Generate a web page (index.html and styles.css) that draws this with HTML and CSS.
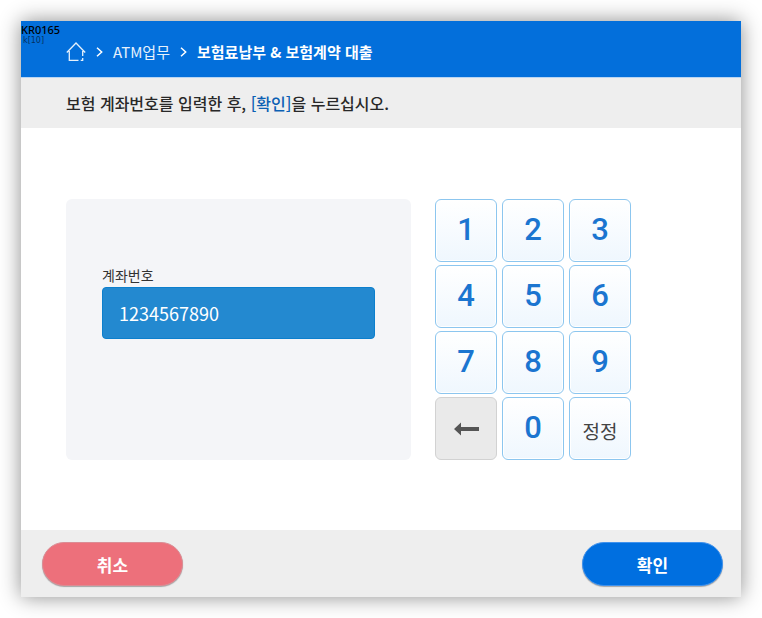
FILE: index.html
```html
<!DOCTYPE html>
<html lang="ko">
<head>
<meta charset="utf-8">
<meta name="viewport" content="width=device-width, initial-scale=1">
<title>보험료납부 &amp; 보험계약 대출</title>
<link rel="stylesheet" href="styles.css">
</head>
<body>
<form class="screen">
  <header class="topbar">
    <div class="debug"><strong class="debug-id">KR0165</strong><span class="debug-key">k[10]</span></div>
    <nav class="crumbs">
      <a class="home" href="#" aria-label="홈">
        <svg width="20" height="20" viewBox="0 0 20 20" fill="none" stroke="currentColor" stroke-width="1.3"><path d="M.8 10.5 10 1l9.2 9.5M3.3 9v9.3h9.2M16.7 9v5M16.7 16v2.3h-2"/></svg>
      </a>
      <svg class="chevron" width="7" height="10" viewBox="0 0 7 10" fill="none" stroke="currentColor" stroke-width="1.5"><path d="m1 .7 4.7 4.3L1 9.3"/></svg>
      <a class="crumb" href="#">ATM업무</a>
      <svg class="chevron" width="7" height="10" viewBox="0 0 7 10" fill="none" stroke="currentColor" stroke-width="1.5"><path d="m1 .7 4.7 4.3L1 9.3"/></svg>
      <span class="current">보험료납부 &amp; 보험계약 대출</span>
    </nav>
  </header>
  <h1 class="prompt">보험 계좌번호를 입력한 후, <span class="accent">[확인]</span>을 누르십시오.</h1>
  <main class="content">
    <section class="panel">
      <label class="label" for="account">계좌번호</label>
      <input class="account" id="account" type="text" inputmode="numeric" value="1234567890">
    </section>
    <div class="keypad">
      <button class="key" type="button">1</button>
      <button class="key" type="button">2</button>
      <button class="key" type="button">3</button>
      <button class="key" type="button">4</button>
      <button class="key" type="button">5</button>
      <button class="key" type="button">6</button>
      <button class="key" type="button">7</button>
      <button class="key" type="button">8</button>
      <button class="key" type="button">9</button>
      <button class="key key-back" type="button" aria-label="지우기"><svg width="25" height="14" viewBox="0 0 25 14" fill="currentColor"><path d="M0 7 7 .5V5h18v4H7v4.5z"/></svg></button>
      <button class="key" type="button">0</button>
      <button class="key key-text" type="button">정정</button>
    </div>
  </main>
  <footer class="actions">
    <button class="action cancel" type="button">취소</button>
    <button class="action confirm" type="submit">확인</button>
  </footer>
</form>
</body>
</html>
```
FILE: styles.css
```css
* { box-sizing: border-box; }

body {
  margin: 0;
  min-height: 100vh;
  padding: 21px;
  display: flex;
  background: #fff;
  color: #282828;
  font-family: "Noto Sans CJK KR", sans-serif;
}

button, input { font-family: inherit; }

.screen {
  flex: 1;
  display: flex;
  flex-direction: column;
  background: #fff;
  box-shadow: 0 0 20px rgba(0, 0, 0, .45);
}

.topbar {
  position: relative;
  display: flex;
  height: 57px;
  padding: 5px 45px 0;
  align-items: center;
  background: #036fdb;
  border-bottom: 1px solid #b9d5f3;
  color: #fff;
}

.debug {
  position: absolute;
  top: 1px;
  left: 0;
  display: flex;
  flex-direction: column;
  color: #000;
}

.debug-id {
  font-family: "Noto Sans", sans-serif;
  font-size: 11px;
  line-height: 15px;
  font-weight: 500;
}

.debug-key {
  padding-left: 2px;
  font-family: "DejaVu Sans", sans-serif;
  font-size: 8px;
  line-height: 8px;
  color: #05305e;
}

.crumbs {
  display: flex;
  align-items: center;
  gap: 10px;
  font-size: 15px;
  line-height: 20px;
  white-space: nowrap;
}

.crumbs a {
  color: #e6f1fc;
  text-decoration: none;
}

.home, .chevron { display: block; }
.home svg { display: block; }
.current { font-weight: 700; }

.prompt {
  margin: 0;
  padding: 0 45px;
  background: #eee;
  font-size: 16px;
  line-height: 50px;
  font-weight: 500;
}

.accent { color: #0b60b4; }

.content {
  flex: 1;
  display: flex;
  align-items: flex-start;
  gap: 24px;
  padding: 71px 110px 70px 45px;
}

.panel {
  flex: 1;
  align-self: stretch;
  display: flex;
  flex-direction: column;
  padding: 65px 36px;
  background: #f4f5f8;
  border-radius: 6px;
}

.label {
  font-size: 14px;
  line-height: 23px;
  color: #333;
}

.account {
  width: 100%;
  height: 52px;
  padding: 0 16px;
  background: #2389d0;
  border: 1px solid #0c7fcd;
  border-radius: 4px;
  color: #fff;
  font-size: 18px;
}

.keypad {
  display: grid;
  grid-template-columns: repeat(3, 62px);
  gap: 3px 5px;
}

.key {
  height: 63px;
  padding: 0 0 2px;
  background: linear-gradient(#fff, #eff7fe);
  border: 1px solid #8cc6ef;
  border-radius: 6px;
  box-shadow: inset 0 0 0 1px #fff;
  color: #1b75d0;
  font: 500 31px/1 Roboto, sans-serif;
}

.key-back {
  display: flex;
  align-items: center;
  justify-content: center;
  padding: 0;
  background: #eaeaea;
  border-color: #d2d2d2;
  box-shadow: none;
  color: #555;
}

.key-text {
  padding: 3px 0 0;
  color: #444;
  font: 400 19px/1 "Noto Sans CJK KR", sans-serif;
}

.actions {
  display: flex;
  justify-content: space-between;
  padding: 12px 18px 11px 21px;
  background: #eee;
}

.action {
  width: 141px;
  height: 44px;
  padding: 0;
  border: 1px solid;
  border-radius: 22px;
  box-shadow: 0 1px 1px rgba(0, 0, 0, .3);
  color: #fff;
  font-size: 17px;
  font-weight: 700;
}

.cancel { background: #ed707b; border-color: #dc8c94; }
.confirm { background: #006fe0; border-color: #3f92ee; }
```
